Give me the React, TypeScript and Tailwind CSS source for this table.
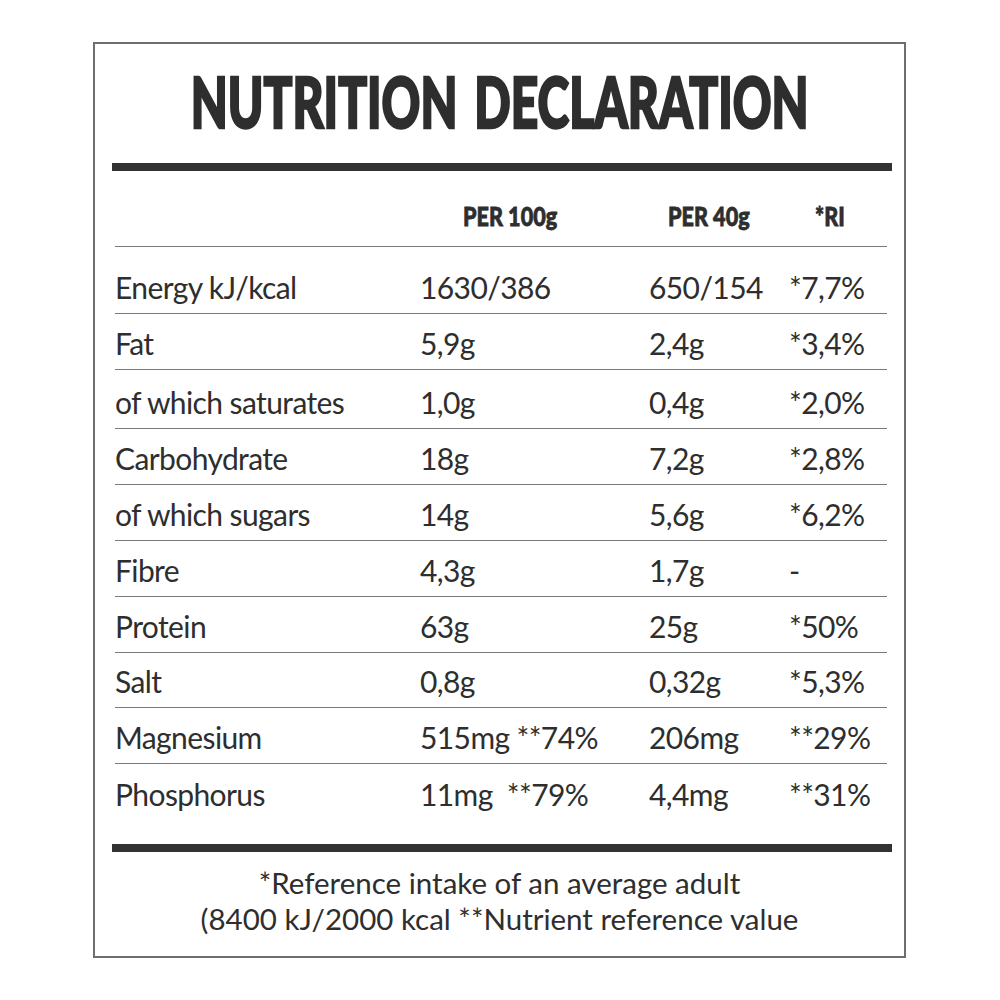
import React from "react";

const rows: { cells: string[]; h: string }[] = [
  { cells: ["Energy kJ/kcal", "1630/386", "650/154", "*7,7%"], h: "h-[67px]" },
  { cells: ["Fat", "5,9g", "2,4g", "*3,4%"], h: "h-[56px]" },
  { cells: ["of which saturates", "1,0g", "0,4g", "*2,0%"], h: "h-[59px]" },
  { cells: ["Carbohydrate", "18g", "7,2g", "*2,8%"], h: "h-[56px]" },
  { cells: ["of which sugars", "14g", "5,6g", "*6,2%"], h: "h-[56px]" },
  { cells: ["Fibre", "4,3g", "1,7g", "-"], h: "h-[56px]" },
  { cells: ["Protein", "63g", "25g", "*50%"], h: "h-[56px]" },
  { cells: ["Salt", "0,8g", "0,32g", "*5,3%"], h: "h-[55px]" },
  { cells: ["Magnesium", "515mg **74%", "206mg", "**29%"], h: "h-[56px]" },
  { cells: ["Phosphorus", "11mg  **79%", "4,4mg", "**31%"], h: "h-[56px]" },
];

export default function App() {
  return (
    <div className="w-[1000px] h-[1000px] bg-white pt-[42px] pl-[93px] text-[#2e2e2e] font-['Lato',sans-serif]">
      <div className="w-[813px] h-[916px] border-2 border-[#6e6e6e] flex flex-col">
        <div className="h-[119px] pt-[21px] flex justify-center">
          <span className="inline-block text-[71px] leading-none font-black scale-x-[0.675] origin-center whitespace-nowrap [word-spacing:8px] [-webkit-text-stroke:2.5px_#2e2e2e]">
            NUTRITION DECLARATION
          </span>
        </div>
        <div className="h-[8px] bg-[#333333] ml-[17px] mr-[12px]" />
        <div className="ml-[20px] mr-[17px] flex flex-col">
          <div className="h-[76px] grid grid-cols-[305px_229px_140px_1fr] items-end pb-[14px] border-b border-[#7a7a7a]">
            <div />
            <div className="pl-[43px]">
              <span className="inline-block text-[27px] leading-none font-black scale-x-[0.8] origin-left whitespace-nowrap [-webkit-text-stroke:0.8px_#2e2e2e]">PER 100g</span>
            </div>
            <div className="pl-[19px]">
              <span className="inline-block text-[27px] leading-none font-black scale-x-[0.8] origin-left whitespace-nowrap [-webkit-text-stroke:0.8px_#2e2e2e]">PER 40g</span>
            </div>
            <div className="pl-[26px]">
              <span className="inline-block text-[27px] leading-none font-black scale-x-[0.8] origin-left whitespace-nowrap [-webkit-text-stroke:0.8px_#2e2e2e]">*RI</span>
            </div>
          </div>
          {rows.map((r, i) => (
            <div
              key={i}
              className={`${r.h} grid grid-cols-[305px_229px_140px_1fr] items-end pb-[11px] ${i < rows.length - 1 ? "border-b border-[#7a7a7a]" : ""}`}
            >
              {r.cells.map((c, j) => (
                <div key={j} className="text-[30px] leading-none tracking-[-0.6px] whitespace-pre">
                  {c}
                </div>
              ))}
            </div>
          ))}
        </div>
        <div className="h-[24px]" />
        <div className="h-[8px] bg-[#333333] ml-[17px] mr-[12px]" />
        <div className="flex-1 flex flex-col items-center pt-[13px] text-[29.5px] leading-[36px]">
          <div>*Reference intake of an average adult</div>
          <div>(8400 kJ/2000 kcal **Nutrient reference value</div>
        </div>
      </div>
    </div>
  );
}
